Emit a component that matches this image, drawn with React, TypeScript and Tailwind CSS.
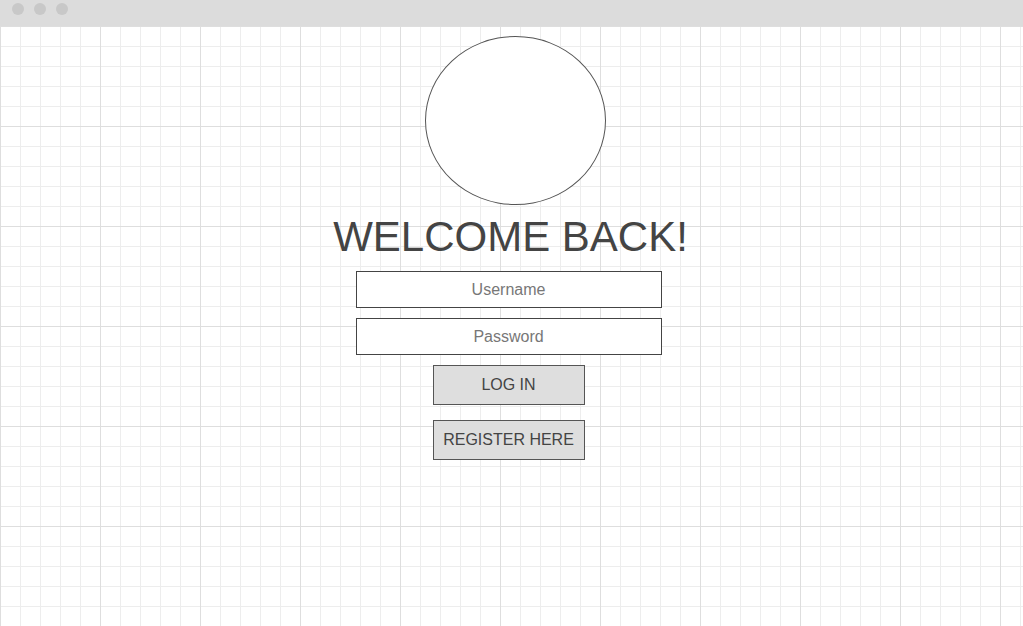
import React from 'react';

function App() {
  return (
    <div className="w-[1023px] h-[626px] overflow-hidden bg-white font-['Liberation_Sans',Arial,sans-serif]">
      {/* window chrome */}
      <div className="h-[26px] bg-[#dcdcdc] flex items-start gap-[10px] pl-[12px] pt-[3px]">
        <span className="w-[12px] h-[12px] rounded-full bg-[#c8c8c8]" />
        <span className="w-[12px] h-[12px] rounded-full bg-[#c8c8c8]" />
        <span className="w-[12px] h-[12px] rounded-full bg-[#c8c8c8]" />
      </div>

      {/* canvas with grid */}
      <div className="h-[600px] flex flex-col items-center pt-[10px] bg-[linear-gradient(to_right,#dedede_1px,transparent_1px),linear-gradient(to_bottom,#dedede_1px,transparent_1px),linear-gradient(to_right,#ededed_1px,transparent_1px),linear-gradient(to_bottom,#ededed_1px,transparent_1px)] bg-[size:100px_100px,100px_100px,20px_20px,20px_20px]">
        <div className="w-[181px] h-[169px] rounded-[50%] border border-[#555] bg-white ml-[7px]" />

        <h1 className="mt-[8px] text-[42px] leading-[48px] text-[#444] mr-[2px]">WELCOME BACK!</h1>

        <div className="mt-[10px] flex flex-col items-center gap-[10px] mr-[6px]">
          <input
            placeholder="Username"
            className="w-[306px] h-[37px] border border-[#444] bg-white text-center text-[16px] text-[#444] placeholder:text-[#777] outline-none"
          />
          <input
            type="password"
            placeholder="Password"
            className="w-[306px] h-[37px] border border-[#444] bg-white text-center text-[16px] text-[#444] placeholder:text-[#777] outline-none"
          />
          <button className="w-[152px] h-[40px] border border-[#555] bg-[#dedede] text-[16px] text-[#444]">
            LOG IN
          </button>
          <button className="mt-[5px] w-[152px] h-[40px] border border-[#555] bg-[#dedede] text-[16px] text-[#444]">
            REGISTER HERE
          </button>
        </div>
      </div>
    </div>
  );
}

export default App;
